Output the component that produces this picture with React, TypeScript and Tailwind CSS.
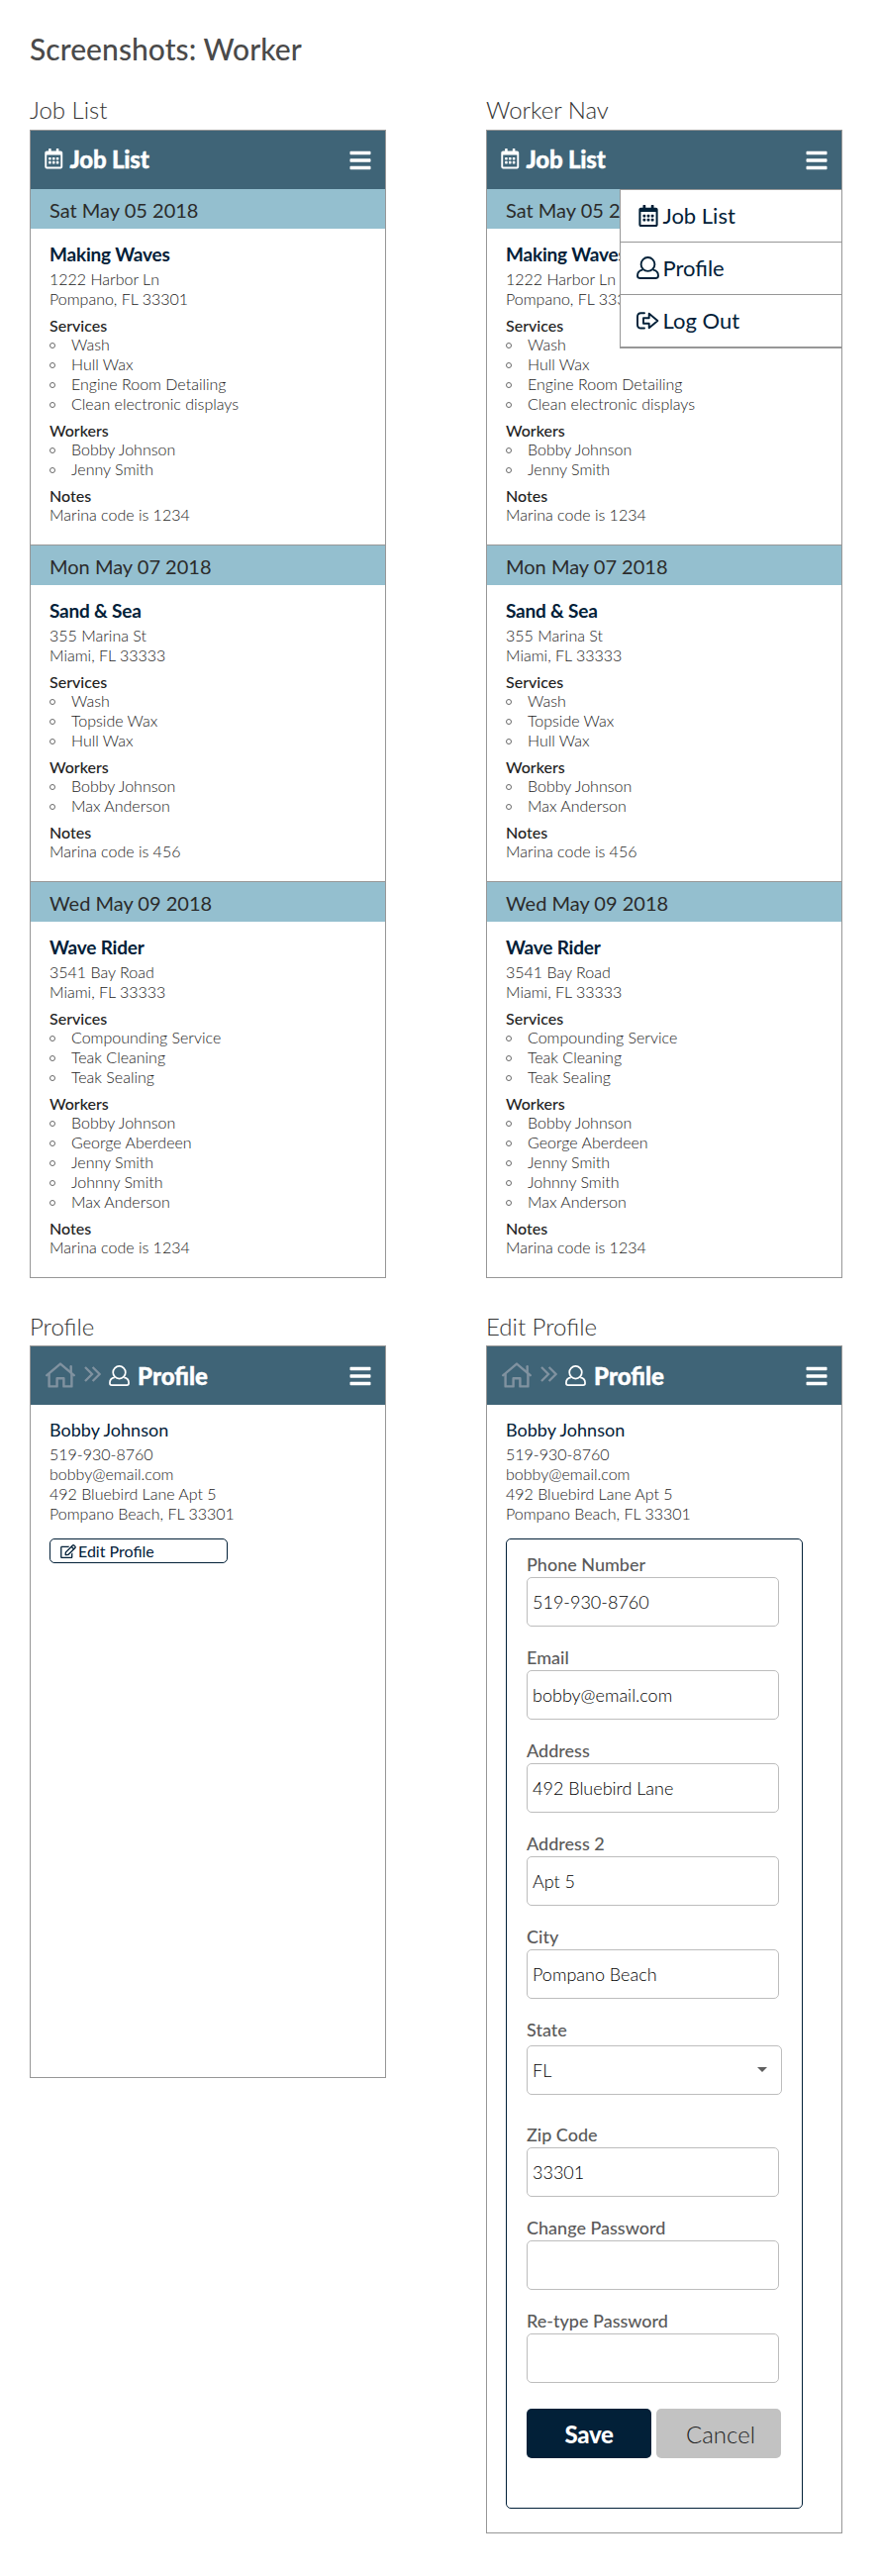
import type { ReactNode } from "react";
import { FaBars, FaRegCalendarAlt, FaRegEdit } from "react-icons/fa";

type Job = {
  date: string;
  boat: string;
  address: string[];
  services: string[];
  workers: string[];
  notes: string;
};

const jobs: Job[] = [
  {
    date: "Sat May 05 2018",
    boat: "Making Waves",
    address: ["1222 Harbor Ln", "Pompano, FL 33301"],
    services: ["Wash", "Hull Wax", "Engine Room Detailing", "Clean electronic displays"],
    workers: ["Bobby Johnson", "Jenny Smith"],
    notes: "Marina code is 1234",
  },
  {
    date: "Mon May 07 2018",
    boat: "Sand & Sea",
    address: ["355 Marina St", "Miami, FL 33333"],
    services: ["Wash", "Topside Wax", "Hull Wax"],
    workers: ["Bobby Johnson", "Max Anderson"],
    notes: "Marina code is 456",
  },
  {
    date: "Wed May 09 2018",
    boat: "Wave Rider",
    address: ["3541 Bay Road", "Miami, FL 33333"],
    services: ["Compounding Service", "Teak Cleaning", "Teak Sealing"],
    workers: ["Bobby Johnson", "George Aberdeen", "Jenny Smith", "Johnny Smith", "Max Anderson"],
    notes: "Marina code is 1234",
  },
];

function UserIcon({ className }: { className: string }) {
  return (
    <svg viewBox="0 0 22 22" className={className} fill="none" stroke="currentColor" strokeWidth="1.8" strokeLinejoin="round">
      <circle cx="11" cy="7.6" r="6.6" />
      <path d="M6 13C3 13.6 1 15.6 1 18.3V19Q1 21 3 21H19Q21 21 21 19V18.3C21 15.6 19 13.6 16 13" />
    </svg>
  );
}

function LogOutIcon({ className }: { className: string }) {
  return (
    <svg viewBox="0 0 23 18" className={className} fill="none" stroke="currentColor" strokeWidth="1.9" strokeLinejoin="round" strokeLinecap="round">
      <path d="M8 1.3H4.5Q1 1.3 1 4.8V13Q1 16.5 4.5 16.5H8" />
      <path d="M7 6.2H12.7V1.8L21.4 9L12.7 16.2V11.8H7Z" />
    </svg>
  );
}

function HomeIcon({ className }: { className: string }) {
  return (
    <svg viewBox="0 0 30 26" className={className} fill="none" stroke="currentColor" strokeWidth="2.4" strokeLinejoin="round" strokeLinecap="round">
      <path d="M1.3 13.2L15 1.6L28.7 13.2" />
      <path d="M25.7 10.4V4.2" />
      <path d="M3.6 12V24.4H11.6V16.2H18.4V24.4H26.4V12" />
    </svg>
  );
}

function ChevronsIcon({ className }: { className: string }) {
  return (
    <svg viewBox="0 0 17 16" className={className} fill="none" stroke="currentColor" strokeWidth="2.3">
      <path d="M1 1L8 8L1 15M8.6 1L15.6 8L8.6 15" />
    </svg>
  );
}

function Screen({ label, height, children }: { label: string; height: string; children: ReactNode }) {
  return (
    <section className="w-[360px]">
      <h2 className="text-[24px] leading-[26px] font-light text-[#333]">{label}</h2>
      <div className={`relative border border-[#979797] ${height}`}>{children}</div>
    </section>
  );
}

function JobHeader() {
  return (
    <header className="flex h-[59px] items-center justify-between bg-[#3f6477] pr-[14px] pl-[13px] text-white">
      <div className="flex items-center">
        <FaRegCalendarAlt className="mt-[-2px] size-[20.5px]" />
        <span className="mt-[-2px] ml-[6px] text-[24px] leading-[28px] font-black tracking-[-0.2px] [-webkit-text-stroke:0.4px_white]">Job List</span>
      </div>
      <FaBars className="h-[24px] w-[22px]" />
    </header>
  );
}

function ProfileHeader() {
  return (
    <header className="flex h-[59px] items-center justify-between bg-[#3f6477] pr-[14px] pl-[15px] text-white">
      <div className="flex items-center">
        <HomeIcon className="mt-[-2px] h-[26px] w-[30px] text-[#8092a0]" />
        <ChevronsIcon className="mt-[-3px] ml-[9px] h-[16px] w-[17px] text-[#8092a0]" />
        <UserIcon className="ml-[8px] size-[21px]" />
        <span className="ml-[8px] text-[24px] leading-[28px] font-black [-webkit-text-stroke:0.4px_white]">Profile</span>
      </div>
      <FaBars className="h-[24px] w-[22px]" />
    </header>
  );
}

function Bullets({ items }: { items: string[] }) {
  return (
    <ul>
      {items.map((item) => (
        <li key={item} className="flex items-center">
          <span className="mt-[2px] mr-[16.5px] ml-[-0.5px] size-[6px] rounded-full border border-[#6a6a6a]" />
          {item}
        </li>
      ))}
    </ul>
  );
}

function SubHeading({ children }: { children: ReactNode }) {
  return <h4 className="pt-[7px] text-[16px] leading-[19px] font-medium text-[#222]">{children}</h4>;
}

function JobList() {
  return (
    <>
      <JobHeader />
      {jobs.map((job, index) => (
        <div key={job.date} className={index ? "border-t border-[#979797]" : ""}>
          <div className="h-[40px] bg-[#94bfcf] pt-[1px] pl-[19px] text-[20px] leading-[40px] text-[#2b2b2b]">{job.date}</div>
          <div className="px-[19px] pb-[20px] text-[16px] leading-[20px] font-light text-[#222]">
            <h3 className="h-[41px] pt-[14px] text-[19px] leading-[24px] font-bold tracking-[-0.2px] text-[#022038]">{job.boat}</h3>
            {job.address.map((line) => (
              <p key={line}>{line}</p>
            ))}
            <SubHeading>Services</SubHeading>
            <Bullets items={job.services} />
            <SubHeading>Workers</SubHeading>
            <Bullets items={job.workers} />
            <SubHeading>Notes</SubHeading>
            <p>{job.notes}</p>
          </div>
        </div>
      ))}
    </>
  );
}

function NavMenu() {
  const row = "flex h-[53px] items-center border-b border-[#979797] pb-[1px] pl-[17px]";
  return (
    <nav className="absolute top-[59px] right-0 w-[224px] border-t border-b border-l border-[#979797] bg-white text-[22px] text-[#022038]">
      <div className={row}>
        <FaRegCalendarAlt className="size-[22px]" />
        <span className="mt-[-1px] ml-[3.5px]">Job List</span>
      </div>
      <div className={row}>
        <UserIcon className="ml-[-1px] size-[23px]" />
        <span className="mt-[-1px] ml-[3.5px]">Profile</span>
      </div>
      <div className={row}>
        <LogOutIcon className="ml-[-1px] h-[18px] w-[23px]" />
        <span className="mt-[-1px] ml-[3.5px]">Log Out</span>
      </div>
    </nav>
  );
}

function Contact() {
  return (
    <div className="text-[16px] leading-[20px] font-light text-[#222]">
      <h3 className="h-[40px] pt-[13px] text-[18px] leading-[24px] font-normal text-[#022038]">Bobby Johnson</h3>
      <p>519-930-8760</p>
      <p>bobby@email.com</p>
      <p>492 Bluebird Lane Apt 5</p>
      <p>Pompano Beach, FL 33301</p>
    </div>
  );
}

function Field({ label, value }: { label: string; value: string }) {
  return (
    <div className="h-[94px]">
      <div className="h-[24px] text-[18px] leading-[22px] font-medium text-[#5a5a5a]">{label}</div>
      <div className="h-[50px] w-[255px] rounded-[5px] border border-[#bdbdbd] pl-[5px] text-[18px] leading-[49px] font-light text-black">
        {value}
      </div>
    </div>
  );
}

function StateSelect() {
  return (
    <div className="h-[106px]">
      <div className="h-[27px] text-[18px] leading-[22px] font-medium text-[#5a5a5a]">State</div>
      <div className="flex h-[50px] w-[258px] items-center justify-between rounded-[5px] border border-[#bdbdbd] pr-[14px] pl-[5px] text-[18px] font-light text-black">
        FL
        <svg viewBox="0 0 10 5" className="mt-[-2px] h-[5px] w-[10px] fill-[#5f5f5f]">
          <path d="M0 0H10L5 5Z" />
        </svg>
      </div>
    </div>
  );
}

export default function App() {
  return (
    <main className="h-[2602px] w-[889px] bg-white pt-[31px] pl-[30px] font-['Lato',sans-serif]">
      <h1 className="h-[67px] text-[30px] leading-[36px] font-medium tracking-[0.05px] text-[#4a4a4a]">Screenshots: Worker</h1>
      <div className="grid grid-cols-[360px_360px] gap-x-[101px] [&_h2]:h-[33px]">
        <Screen label="Job List" height="h-[1160px]">
          <JobList />
        </Screen>
        <Screen label="Worker Nav" height="h-[1160px]">
          <JobList />
          <NavMenu />
        </Screen>
      </div>
      <div className="mt-[36px] grid grid-cols-[360px_360px] items-start gap-x-[101px] [&_h2]:h-[32px]">
        <Screen label="Profile" height="h-[740px]">
          <ProfileHeader />
          <div className="px-[19px]">
            <Contact />
            <button className="mt-[15px] flex h-[25px] w-[180px] items-center rounded-[5px] border border-[#022038] pl-[10px] text-[16px] font-normal text-[#022038]">
              <FaRegEdit className="h-[14px] w-[16px]" />
              <span className="ml-[2px]">Edit Profile</span>
            </button>
          </div>
        </Screen>
        <Screen label="Edit Profile" height="h-[1200px]">
          <ProfileHeader />
          <div className="px-[19px]">
            <Contact />
            <form className="mt-[15px] h-[980px] w-[300px] rounded-[5px] border border-[#022038] pt-[14px] pl-[20px]">
              <Field label="Phone Number" value="519-930-8760" />
              <Field label="Email" value="bobby@email.com" />
              <Field label="Address" value="492 Bluebird Lane" />
              <Field label="Address 2" value="Apt 5" />
              <Field label="City" value="Pompano Beach" />
              <StateSelect />
              <Field label="Zip Code" value="33301" />
              <Field label="Change Password" value="" />
              <Field label="Re-type Password" value="" />
              <div className="flex gap-[5px] pt-[6px] text-[24px]">
                <button type="button" className="h-[50px] w-[126px] rounded-[5px] bg-[#022038] pt-[2px] font-black tracking-[-0.3px] text-white">
                  Save
                </button>
                <button type="button" className="h-[50px] w-[126px] rounded-[5px] bg-[#c2c2c2] pt-[2px] pl-[4px] font-light text-[#222]">
                  Cancel
                </button>
              </div>
            </form>
          </div>
        </Screen>
      </div>
    </main>
  );
}
